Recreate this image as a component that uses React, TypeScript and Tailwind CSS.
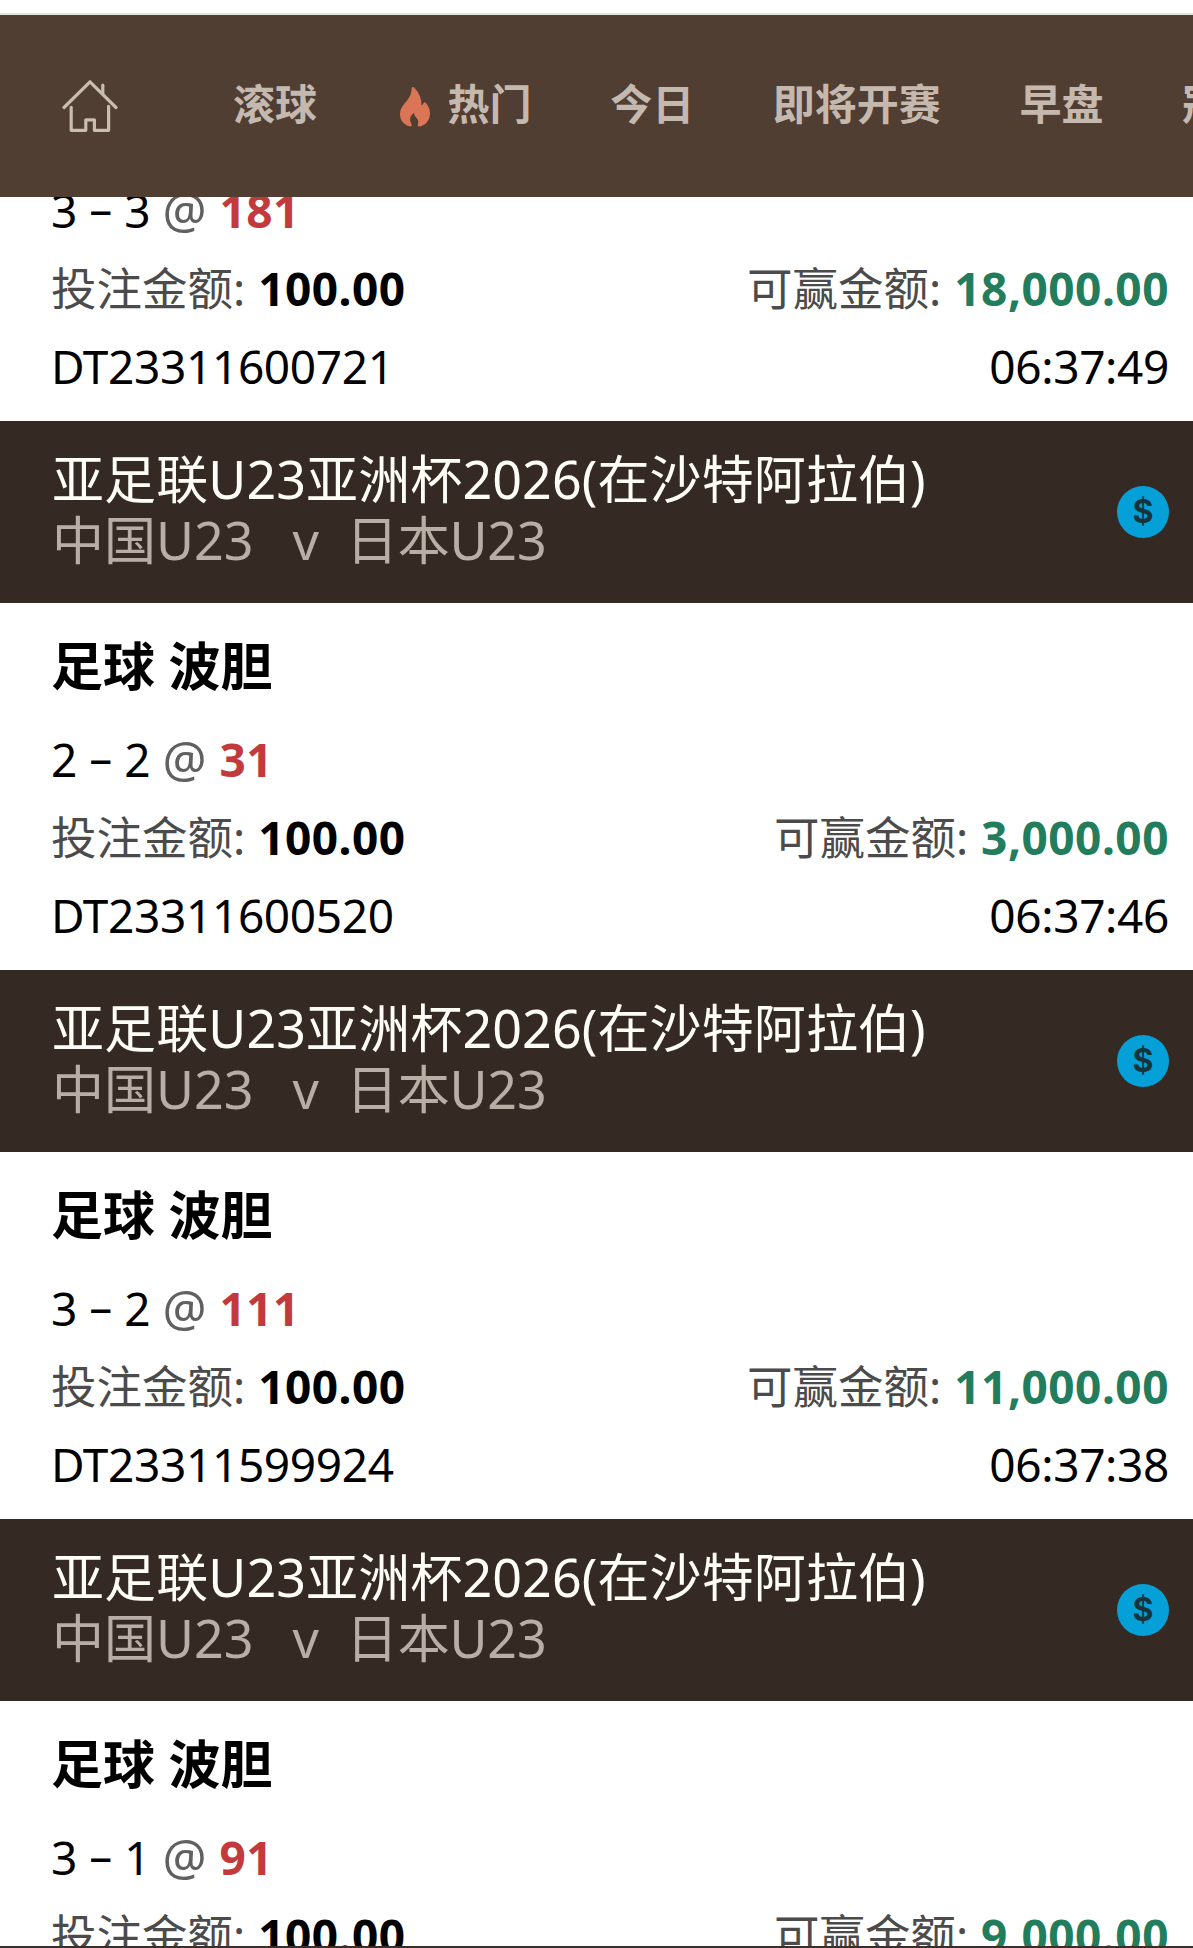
import { clsx } from "clsx";

type Bet = {
  id?: string;
  score: [number, number];
  odds: string;
  stake: string;
  toWin: string;
  time?: string;
};

const TABS = [
  { label: "滚球" },
  { label: "热门", hot: true },
  { label: "今日" },
  { label: "即将开赛" },
  { label: "早盘" },
  { label: "冠军" },
];

const BETS: Bet[] = [
  { id: "DT23311600721", score: [3, 3], odds: "181", stake: "100.00", toWin: "18,000.00", time: "06:37:49" },
  { id: "DT23311600520", score: [2, 2], odds: "31", stake: "100.00", toWin: "3,000.00", time: "06:37:46" },
  { id: "DT23311599924", score: [3, 2], odds: "111", stake: "100.00", toWin: "11,000.00", time: "06:37:38" },
  { score: [3, 1], odds: "91", stake: "100.00", toWin: "9,000.00" },
];

function HomeIcon() {
  return (
    <svg
      className="h-[52px] w-14 shrink-0"
      viewBox="0 0 56 52"
      fill="none"
      stroke="#c9bcb0"
      strokeWidth="3.2"
      strokeLinecap="round"
      strokeLinejoin="round"
    >
      <path d="M2 27.500 28 1.800l26 25.700" />
      <path d="M40.800 13.500V5" />
      <path d="M9.200 27.300v23h14.600V39.800h8.600v10.500h14.200V26.300" />
    </svg>
  );
}

function FlameIcon() {
  return (
    <svg className="mt-[6px] h-10 w-[30px] shrink-0" viewBox="0 0 30 40" fill="#da7556">
      <path d="M12.2 0.3c.6-.5 1.2-.4 1.8.2 2.6 2.6 4.6 5.4 5.8 8.4 1.1 2.8 1.8 5.900 1.600 9.500 1-.4 1.700-1.100 2.300-2.300.6-1.100 1.800-1.200 2.300-.1C28.600 19.200 30 22.600 30 26.200c0 6.400-3.700 11.500-9.300 13.100-2.300.6-3.400-.4-2.800-2.200.9-2.800 0-5-1.700-6.600-1.300-1.200-2.100-2.600-2.100-4.700-2.700 1.900-4.300 4.500-4 7.500.1 1.300.6 2.400 1.300 3.700.9 1.700-.2 2.900-2.100 2.300C3.600 37.600 0 33 0 27.200c0-4.600 2.100-8 5.300-11.600C8.700 11.700 11.500 7.300 11.600 1.900c0-.7.2-1.200.6-1.600Z" />
    </svg>
  );
}

function NavBar() {
  return (
    <nav className="relative z-10 flex h-[184px] shrink-0 items-center border-t-2 border-[#e6e2dc] bg-[#503e33] pl-[62px] text-[42px] leading-[60px] font-bold text-[#c5b9af]">
      <HomeIcon />
      <ul className="ml-[115px] flex items-center gap-[78.6px] pb-[5px] whitespace-nowrap">
        {TABS.map((tab) => (
          <li key={tab.label} className={clsx("flex items-center", tab.hot && "gap-[18px] pl-[4px]")}>
            {tab.hot ? <FlameIcon /> : null}
            {tab.label}
          </li>
        ))}
      </ul>
    </nav>
  );
}

function MatchHeader() {
  return (
    <header className="flex h-[182px] items-center justify-between bg-[#352a23] pr-6 pl-[52px]">
      <div className="-mt-[7px] text-[52px] leading-[61px]">
        <h2 className="tracking-[0.1px] text-[#fffdf8]">亚足联U23亚洲杯2026(在沙特阿拉伯)</h2>
        <p className="flex text-[#b9aea6]">
          <span>中国U23</span>
          <span className="ml-[39px]">v</span>
          <span className="ml-[27px] tracking-[-0.2px]">日本U23</span>
        </p>
      </div>
      <span className="flex size-[52px] items-center justify-center rounded-full bg-[#05a0d8] font-['Inter'] text-[32px] leading-none font-bold text-[#17343c]">
        $
      </span>
    </header>
  );
}

function Amount({ label, value, win }: { label: string; value: string; win?: boolean }) {
  return (
    <div>
      <span className="text-[45.5px] text-[#4b4b4b]">{label}:</span>{" "}
      <b className={clsx("ml-px tracking-[0.5px]", win && "text-[#227d5d]")}>{value}</b>
    </div>
  );
}

function BetDetails({ bet }: { bet: Bet }) {
  const [home, away] = bet.score;

  return (
    <div className="pt-px pr-6 pb-4 pl-[51px] text-[46px] leading-[78px] text-black">
      <div className="h-[78px]">
        {home} <span className="inline-block align-[3px] leading-none">–</span> {away}{" "}
        <span className="text-[49px] leading-none text-[#606060]">@</span>{" "}
        <b className="ml-px tracking-[0.4px] text-[#c23a3b]">{bet.odds}</b>
      </div>
      <div className="flex justify-between">
        <Amount label="投注金额" value={bet.stake} />
        <Amount label="可赢金额" value={bet.toWin} win />
      </div>
      {bet.id ? (
        <div className="flex justify-between tracking-[-0.35px]">
          <span>{bet.id}</span>
          <span>{bet.time}</span>
        </div>
      ) : null}
    </div>
  );
}

export default function App() {
  return (
    <div className="flex h-[1948px] w-full flex-col overflow-hidden border-b-2 border-[#3a3029] bg-white pt-[13px] font-['Noto_Sans','Noto_Sans_CJK_SC',sans-serif]">
      <NavBar />
      {/* list is scrolled, so the first ticket sits partly under the nav */}
      <main className="-mt-[27px]">
        {BETS.map((bet, i) => (
          <section key={i}>
            {i > 0 ? (
              <>
                <MatchHeader />
                <h3 className="h-[116px] pt-[9px] pl-[51px] text-[52px] leading-[108px] font-bold text-black">
                  足球 波胆
                </h3>
              </>
            ) : null}
            <BetDetails bet={bet} />
          </section>
        ))}
      </main>
    </div>
  );
}
